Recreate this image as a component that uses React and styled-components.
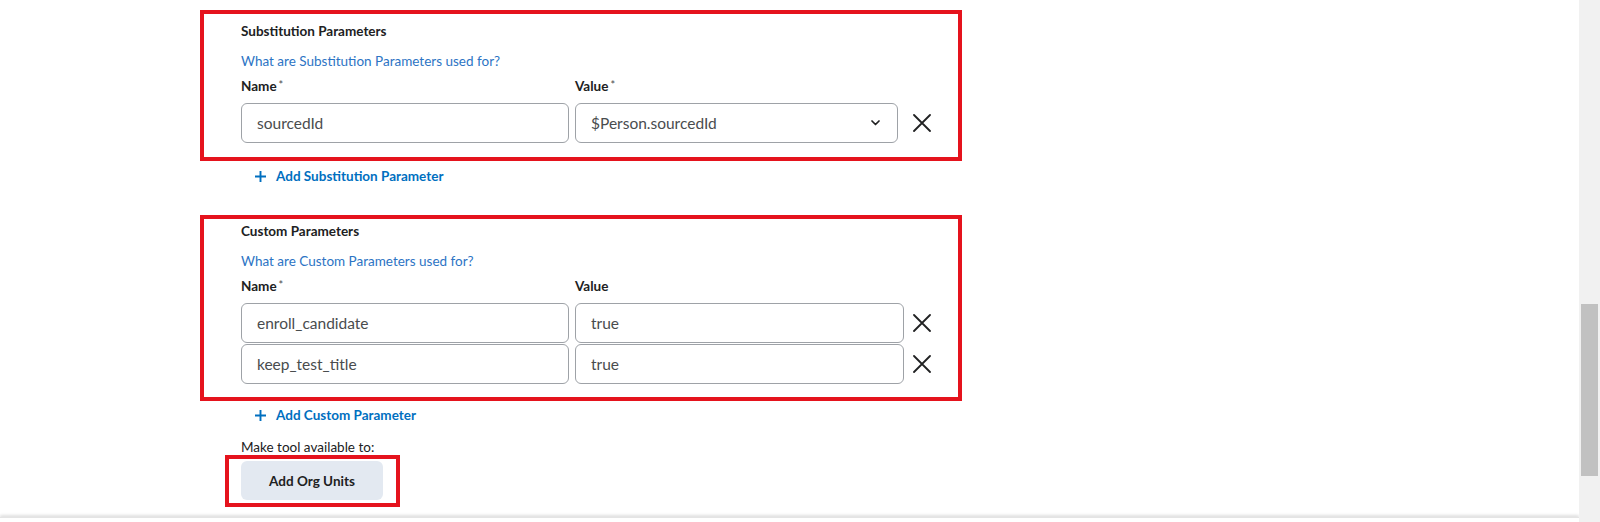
import React from "react";
import styled, { createGlobalStyle } from "styled-components";

const GlobalStyle = createGlobalStyle`
  html, body {
    margin: 0;
    padding: 0;
    background: #ffffff;
    font-family: Lato, "Open Sans", "Liberation Sans", sans-serif;
    color: #202122;
    overflow: hidden;
  }
  * { box-sizing: border-box; }
`;

const substitutionRows = [{ name: "sourcedId", value: "$Person.sourcedId", select: true }];
const customRows = [
  { name: "enroll_candidate", value: "true" },
  { name: "keep_test_title", value: "true" },
];

function CloseIcon() {
  return (
    <svg width="18" height="18" viewBox="0 0 18 18" fill="none">
      <path d="M1 1 L17 17 M17 1 L1 17" stroke="#202122" strokeWidth="1.8" strokeLinecap="round" />
    </svg>
  );
}

function Chevron() {
  return (
    <svg width="9" height="6" viewBox="0 0 9 6" fill="none">
      <polyline points="1,1 4.5,4.5 8,1" stroke="#202122" strokeWidth="1.7" strokeLinecap="round" strokeLinejoin="round" />
    </svg>
  );
}

function PlusIcon() {
  return (
    <svg width="11" height="11" viewBox="0 0 11 11" fill="none">
      <path d="M5.5 0 V11 M0 5.5 H11" stroke="#006fbf" strokeWidth="1.9" />
    </svg>
  );
}

function ParamSection({ title, help, valueLabel, valueRequired, rows, topPad, bottomPad }) {
  return (
    <Highlight $top={topPad} $bottom={bottomPad}>
      <SectionTitle>{title}</SectionTitle>
      <HelpLink>{help}</HelpLink>
      <LabelRow>
        <FieldLabel>
          Name<Required>*</Required>
        </FieldLabel>
        <FieldLabel>
          {valueLabel}
          {valueRequired && <Required>*</Required>}
        </FieldLabel>
      </LabelRow>
      <Rows>
        {rows.map((row) => (
          <ParamRow key={row.name}>
            <TextField value={row.name} readOnly />
            {row.select ? (
              <SelectField>
                <span>{row.value}</span>
                <Chevron />
              </SelectField>
            ) : (
              <TextField value={row.value} readOnly />
            )}
            <RemoveButton aria-label="Remove">
              <CloseIcon />
            </RemoveButton>
          </ParamRow>
        ))}
      </Rows>
    </Highlight>
  );
}

export default function App() {
  return (
    <>
      <GlobalStyle />
      <Screen>
        <Main>
          <Content>
            <ParamSection
              title="Substitution Parameters"
              help="What are Substitution Parameters used for?"
              valueLabel="Value"
              valueRequired
              rows={substitutionRows}
              topPad={7}
              bottomPad={14}
            />
            <AddLink $top={5}>
              <PlusIcon />
              Add Substitution Parameter
            </AddLink>
            <Spacer $h={29} />
            <ParamSection
              title="Custom Parameters"
              help="What are Custom Parameters used for?"
              valueLabel="Value"
              rows={customRows}
              topPad={2}
              bottomPad={13}
            />
            <AddLink $top={4}>
              <PlusIcon />
              Add Custom Parameter
            </AddLink>
            <AvailableText>Make tool available to:</AvailableText>
            <ButtonHighlight>
              <OrgButton>Add Org Units</OrgButton>
            </ButtonHighlight>
          </Content>
          <Footer />
        </Main>
        <ScrollTrack>
          <ScrollThumb />
        </ScrollTrack>
      </Screen>
    </>
  );
}

const Screen = styled.div`
  display: flex;
  width: 100%;
  height: 522px;
`;

const Main = styled.div`
  flex: 1;
  display: flex;
  flex-direction: column;
  min-width: 0;
`;

const Content = styled.div`
  flex: 1;
  overflow: hidden;
  padding: 10px 0 0 200px;
  display: flex;
  flex-direction: column;
  align-items: flex-start;
`;

const Footer = styled.div`
  height: 5px;
  flex-shrink: 0;
  background: #ffffff;
  box-shadow: 0 -2px 3px rgba(0, 0, 0, 0.12);
  border-top: 1px solid #e4e4e4;
`;

const ScrollTrack = styled.div`
  width: 21px;
  flex-shrink: 0;
  background: #f1f1f1;
  padding: 304px 2px 0 2px;
`;

const ScrollThumb = styled.div`
  height: 172px;
  background: #c1c1c1;
`;

const Highlight = styled.section`
  width: 762px;
  border: 4px solid #e5131d;
  padding: ${(p) => p.$top}px 27px ${(p) => p.$bottom}px 37px;
`;

const SectionTitle = styled.h3`
  margin: 0;
  font-size: 13.5px;
  line-height: 20px;
  font-weight: 700;
  color: #202122;
`;

const HelpLink = styled.a`
  display: block;
  margin-top: 10px;
  font-size: 13.5px;
  line-height: 20px;
  color: #2c74c4;
  cursor: pointer;
`;

const LabelRow = styled.div`
  display: grid;
  grid-template-columns: 328px 329px;
  column-gap: 6px;
  margin-top: 5px;
  height: 20px;
`;

const FieldLabel = styled.label`
  display: block;
  height: 20px;
  font-size: 13.5px;
  line-height: 20px;
  font-weight: 700;
  color: #202122;
`;

const Required = styled.span`
  margin-left: 2px;
  font-size: 11px;
  line-height: 0;
  font-weight: 400;
  vertical-align: 2px;
  color: #494c4e;
`;

const Rows = styled.div`
  display: flex;
  flex-direction: column;
  gap: 1px;
  margin-top: 7px;
`;

const ParamRow = styled.div`
  display: grid;
  grid-template-columns: 328px 329px 18px;
  column-gap: 6px;
  align-items: center;
`;

const TextField = styled.input`
  height: 40px;
  width: 100%;
  border: 1px solid #9ea2a7;
  border-radius: 6px;
  padding: 0 15px;
  font-family: Lato, "Open Sans", "Liberation Sans", sans-serif;
  font-size: 15.5px;
  color: #494c4e;
  background: #ffffff;
  outline: none;
`;

const SelectField = styled.div`
  height: 40px;
  width: 323px;
  border: 1px solid #9ea2a7;
  border-radius: 6px;
  padding: 0 17px 0 15px;
  display: flex;
  align-items: center;
  justify-content: space-between;
  font-size: 15.5px;
  color: #494c4e;
`;

const RemoveButton = styled.button`
  border: none;
  background: none;
  padding: 0;
  margin-left: 3px;
  width: 18px;
  height: 18px;
  display: flex;
  cursor: pointer;
`;

const AddLink = styled.a`
  display: flex;
  align-items: center;
  gap: 10px;
  margin: ${(p) => p.$top}px 0 0 55px;
  font-size: 13.5px;
  line-height: 20px;
  font-weight: 700;
  color: #006fbf;
  cursor: pointer;
`;

const Spacer = styled.div`
  height: ${(p) => p.$h}px;
`;

const AvailableText = styled.div`
  margin: 14px 0 0 41px;
  font-size: 13.5px;
  line-height: 16px;
  color: #202122;
`;

const ButtonHighlight = styled.div`
  margin-left: 25px;
  border: 4px solid #e5131d;
  padding: 2px 13px 3px 12px;
`;

const OrgButton = styled.button`
  width: 142px;
  height: 39px;
  border: none;
  border-radius: 6px;
  background: #e3e9f1;
  font-family: Lato, "Open Sans", "Liberation Sans", sans-serif;
  font-size: 13.5px;
  font-weight: 700;
  color: #202122;
  cursor: pointer;
`;
